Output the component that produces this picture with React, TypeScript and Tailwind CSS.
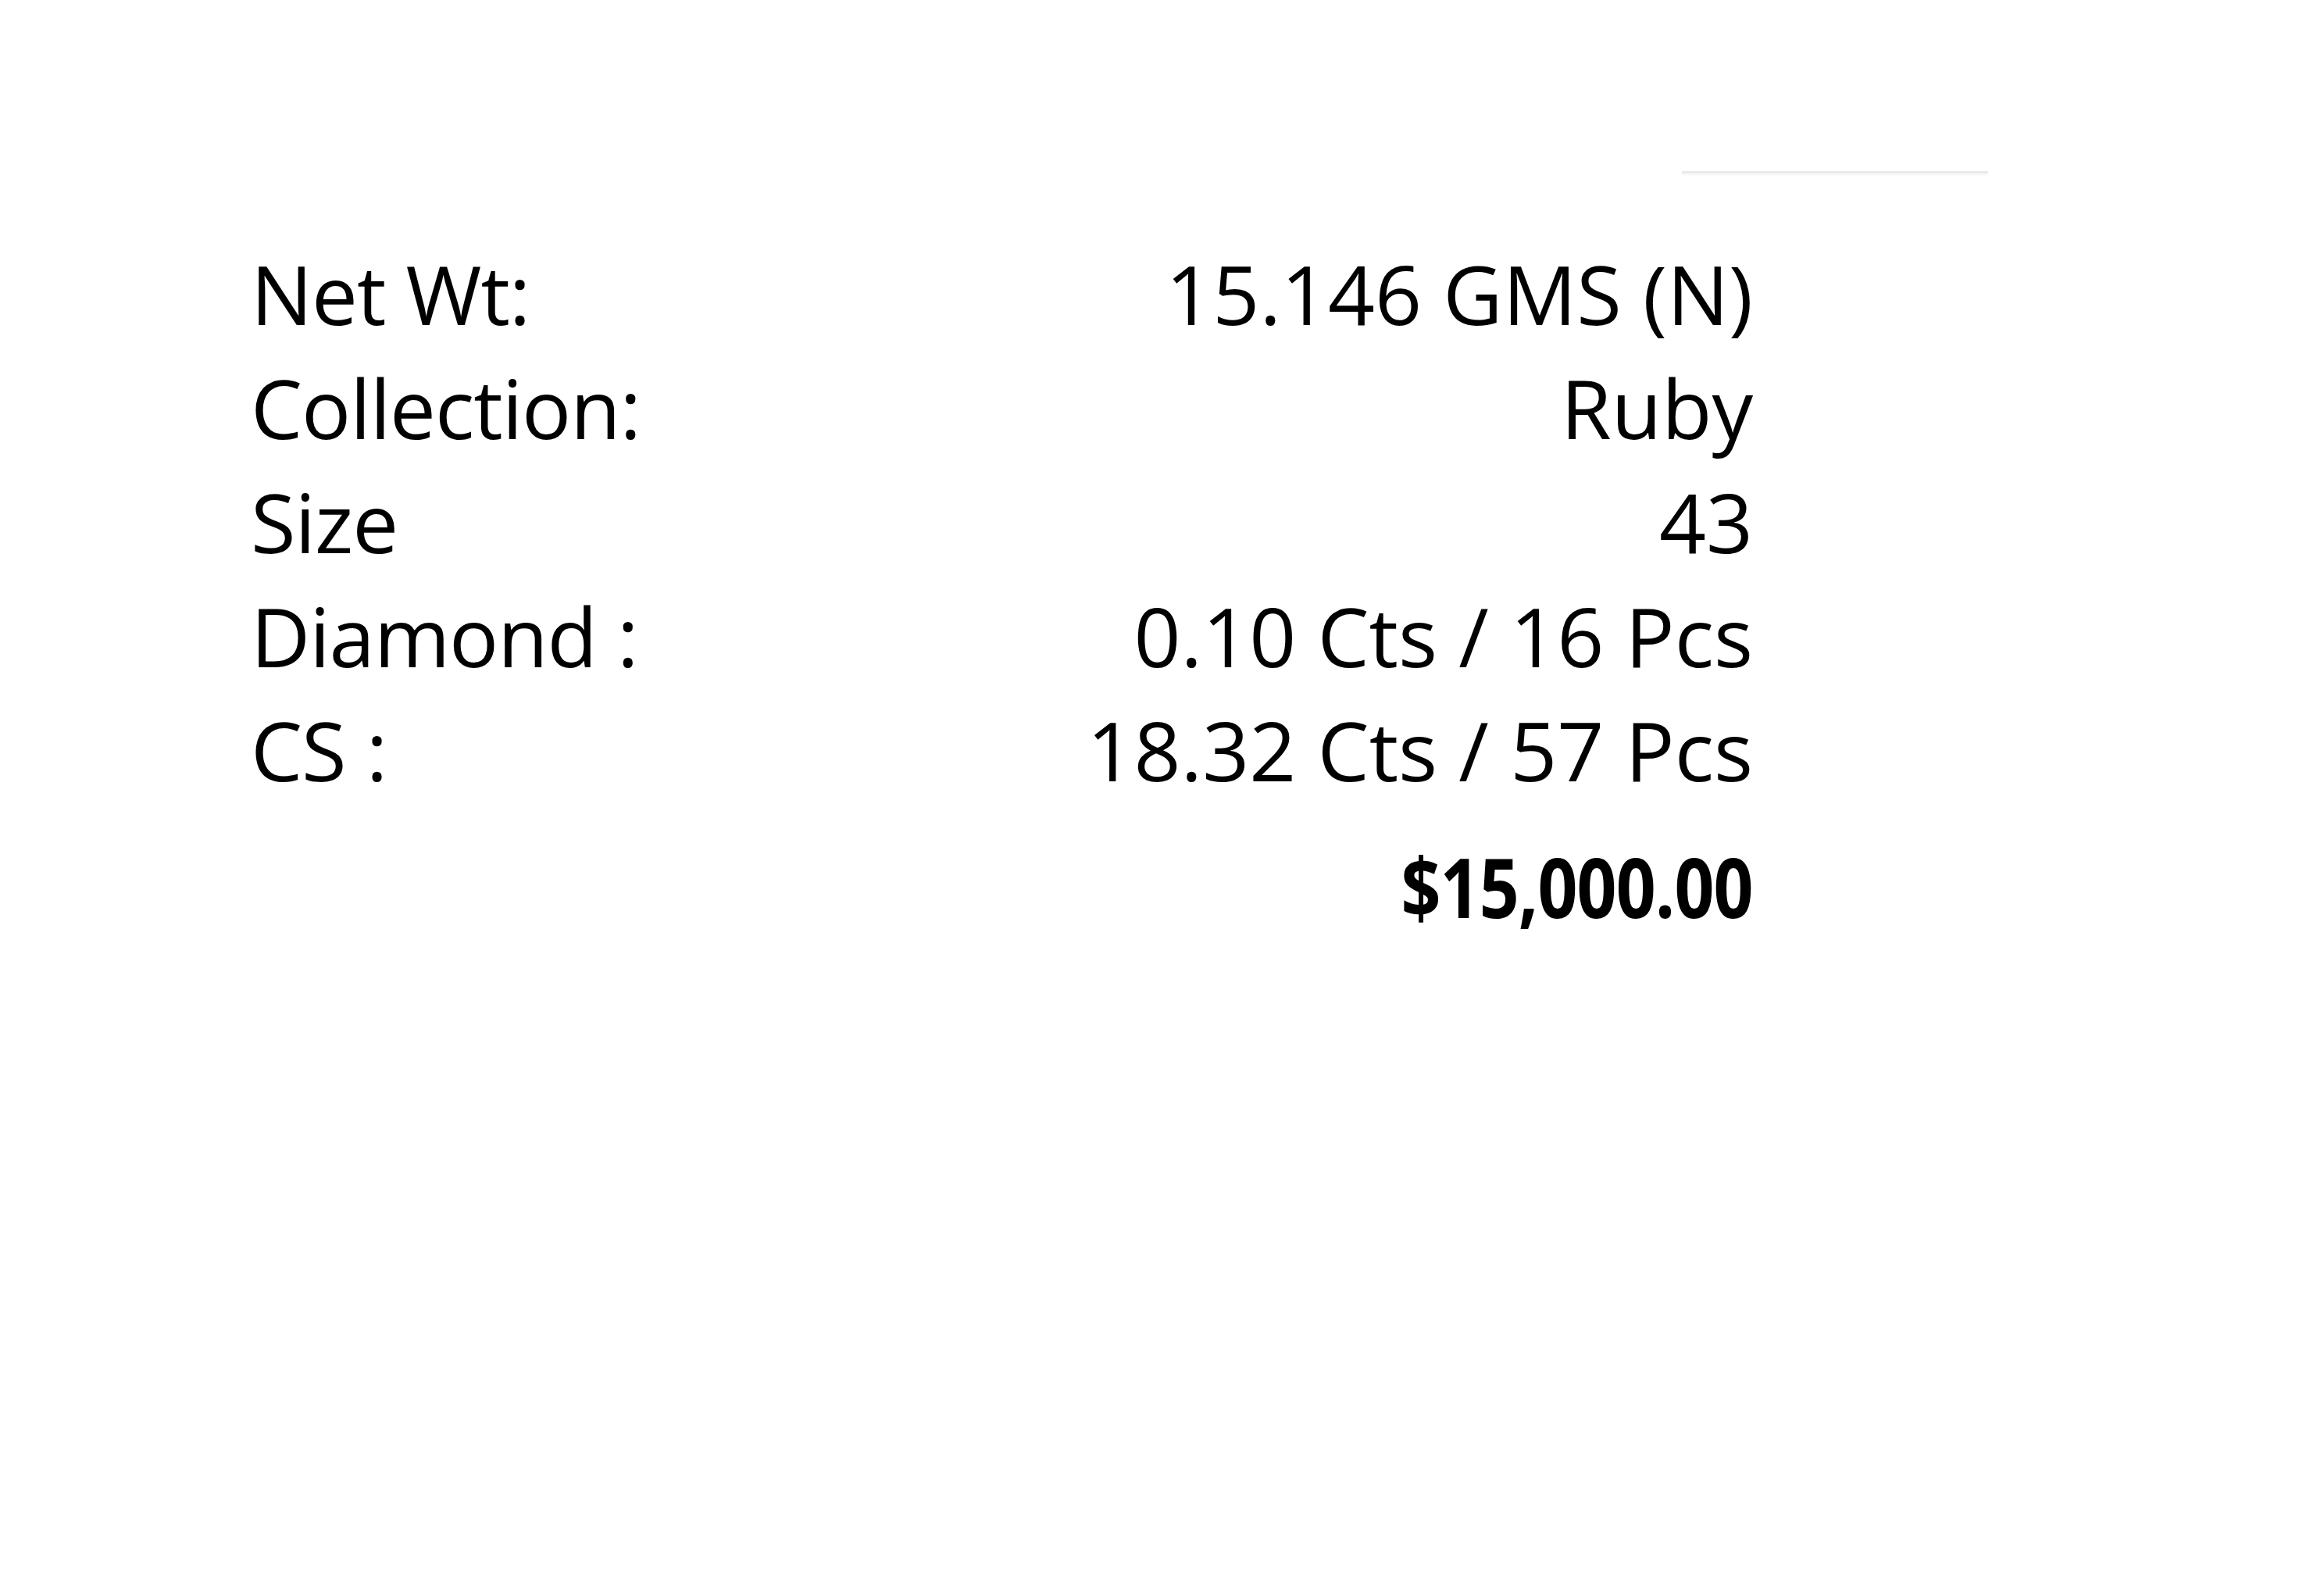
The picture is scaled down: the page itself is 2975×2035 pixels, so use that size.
import React from 'react'

const rows: { label: string; value: string }[] = [
  { label: 'Net Wt:', value: '15.146 GMS (N)' },
  { label: 'Collection:', value: 'Ruby' },
  { label: 'Size', value: '43' },
  { label: 'Diamond :', value: '0.10 Cts / 16 Pcs' },
  { label: 'CS :', value: '18.32 Cts / 57 Pcs' },
]

export default function App() {
  return (
    <div className="w-[2975px] h-[2035px] bg-white text-black font-['Open_Sans','Liberation_Sans',sans-serif] overflow-hidden">
      {/* faint rule, top right */}
      <div className="pt-[219px] flex">
        <div className="ml-[2153px] w-[392px] h-[3px] bg-[#e9e9e9] shadow-[0_2px_3px_rgba(0,0,0,0.04)]" />
      </div>

      <div className="mt-[81px] ml-[321px] w-[1923px]">
        {rows.map((r) => (
          <div key={r.label} className="flex justify-between text-[105px] leading-[146px] font-medium">
            <span className="tracking-[-0.01em]">{r.label}</span>
            <span className="text-right">{r.value}</span>
          </div>
        ))}
        <div className="flex justify-end mt-[29px] text-[105px] leading-[146px] font-bold">
          <span className="origin-right scale-x-[0.85] inline-block tracking-[-0.01em]">$15,000.00</span>
        </div>
      </div>
    </div>
  )
}
